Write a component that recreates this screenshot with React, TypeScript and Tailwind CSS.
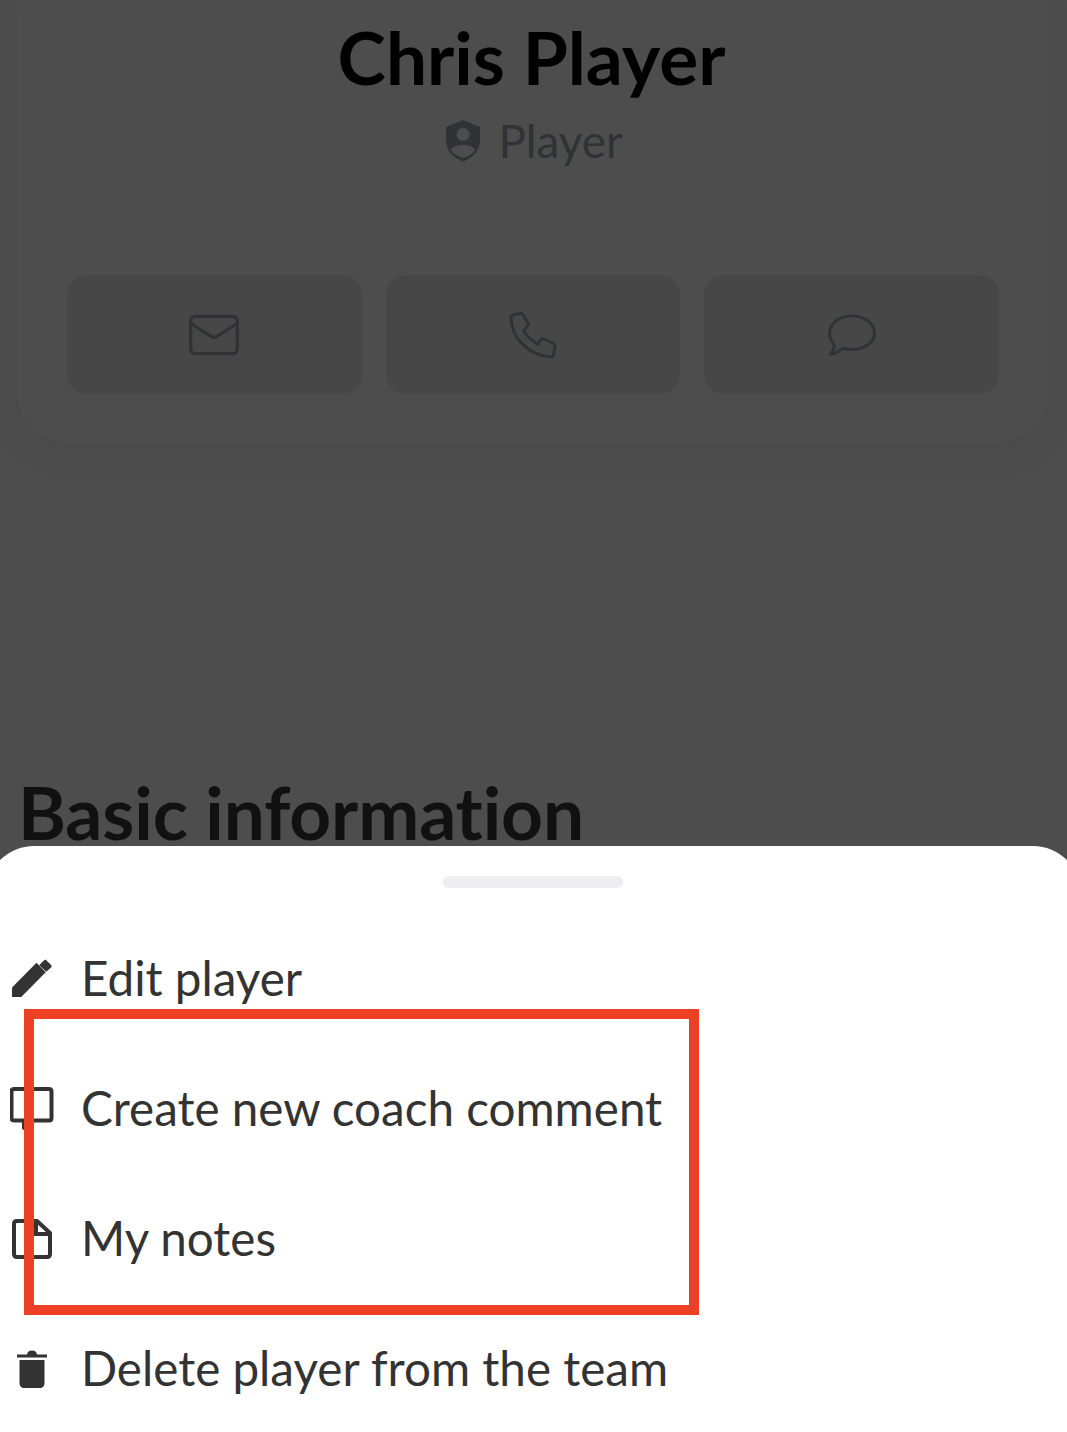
import { Mail } from 'lucide-react';
import type { ReactNode } from 'react';

const PencilIcon = () => (
  <svg viewBox="0 0 42 40" className="h-10 w-10 fill-[#333333]">
    <path d="M0 39.5V29.5L26.5 3.5L36.5 13.5L10 39.5Z" transform="translate(0 -0.5) scale(0.97 1)" />
    <path d="M28.5 6.5L33.5 1.5C34.3 0.7 35.3 0.7 36 1.4L41 6.2C41.8 7 41.8 8 41 8.8L36 13.5Z" transform="translate(0 -1)" />
  </svg>
);

const CommentIcon = () => (
  <svg viewBox="0 0 44 44" fill="none" className="h-11 w-11 stroke-[#333333] stroke-[4]">
    <path d="M4 2H39C40.5 2 41.5 3 41.5 4.500V31C41.500 32.500 40.500 33.500 39 33.500H22L14 41V33.500H4C2.500 33.500 1.500 32.500 1.500 31V4.500C1.500 3 2.500 2 4 2Z" strokeLinejoin="round" />
  </svg>
);

const NoteIcon = () => (
  <svg viewBox="0 0 40 40" fill="none" className="h-10 w-10 stroke-[#333333] stroke-[4]">
    <path d="M5 2H25L38 14V35C38 37 37 38 35 38H5C3 38 2 37 2 35V5C2 3 3 2 5 2Z" strokeLinejoin="round" />
    <path d="M24 2V15H38" />
  </svg>
);

const TrashIcon = () => (
  <svg viewBox="0 0 32 40" className="h-10 w-8 fill-[#333333]">
    <path d="M1 5.500H11C11.500 3 13 1.500 16 1.500C19 1.500 20.500 3 21 5.500H31V8.500H1Z" />
    <path d="M3.500 11H28.500V34C28.500 37 26.500 39 24 39H8C5.500 39 3.500 37 3.500 34Z" />
  </svg>
);

const ShieldIcon = () => (
  <svg viewBox="0 0 34 42" className="h-[42px] w-[34px] fill-[#2f3334]">
    <path
      fillRule="evenodd"
      d="M17 0L34 7V20C34 30 27 38 17 41.500C7 38 0 30 0 20V7ZM17 8A6.500 6.500 0 1 0 17 21A6.500 6.500 0 0 0 17 8ZM17 25C11 25 6.500 27 4.500 29.500C7 33.500 11.500 36.500 17 38C22.500 36.500 27 33.500 29.500 29.500C27.500 27 23 25 17 25Z"
    />
  </svg>
);

const PhoneIcon = () => (
  <svg viewBox="0 0 48 48" fill="none" className="h-12 w-12 stroke-[#2f3334] stroke-[3]" strokeLinejoin="round">
    <path d="M4 4L11 2.500C12.500 2.200 13.500 2.800 14 4L19 12C19.700 13.200 19.500 14.300 18.500 15.200L14.500 19.500C17.500 25 22 29.500 28.500 33L32 28.500C33 27.500 34 27.300 35.200 28L44.500 32.500C45.700 33.200 46.200 34 46 35.500L44.500 44C44.200 45.500 43.300 46.200 42 46C20 44.500 2 27 2 6.500C2 5 2.700 4.300 4 4Z" />
  </svg>
);

const BubbleIcon = () => (
  <svg viewBox="0 0 48 42" fill="none" className="h-[42px] w-12 stroke-[#2f3334] stroke-[3]" strokeLinejoin="round">
    <path d="M24 2C36 2 46.500 9 46.500 19C46.500 29 36 35.500 24 35.500C20.500 35.500 17.500 35 15 34C12 37 7 39.500 2.500 40C5 37 6.500 33.500 6 30C3 27 1.500 23 1.500 19C1.500 9 12 2 24 2Z" />
  </svg>
);

const ContactButton = ({ children }: { children: ReactNode }) => (
  <div className="flex h-[119px] flex-1 items-center justify-center rounded-[20px] bg-[#474747] text-[#2f3334]">
    {children}
  </div>
);

const SheetRow = ({ icon, label }: { icon: ReactNode; label: string }) => (
  <div className="flex h-[130px] items-center">
    <div className="flex w-[64px] shrink-0 justify-center">{icon}</div>
    <span className="mb-0.5 ml-[17px] text-[47.6px] leading-none text-[#333333]">{label}</span>
  </div>
);

export default function App() {
  return (
    <div className="relative flex h-[1432px] flex-col overflow-hidden bg-[#4d4d4d] font-['Lato',sans-serif]">
      <div className="h-[846px] shrink-0 overflow-hidden">
        <div className="ml-[17px] mr-[18px] flex h-[442px] flex-col items-center rounded-b-[48px] bg-[#4d4d4d] px-[50px] shadow-[0_12px_36px_rgba(0,0,0,0.05)]">
          <h1 className="mr-[3px] mt-[13px] text-[73px] font-bold leading-[88px] text-[#000000]">
            Chris Player
          </h1>
          <div className="ml-[3px] mt-[15px] flex h-[50px] items-center gap-[18px]">
            <ShieldIcon />
            <span className="text-[45.8px] leading-none text-[#2f3334]">Player</span>
          </div>
          <div className="mt-[109px] flex w-full gap-6">
            <ContactButton>
              <Mail size={56} strokeWidth={1.400} />
            </ContactButton>
            <ContactButton>
              <PhoneIcon />
            </ContactButton>
            <ContactButton>
              <BubbleIcon />
            </ContactButton>
          </div>
        </div>
        <h2 className="ml-[18px] mt-[326px] whitespace-nowrap text-[73px] font-bold leading-[88px] tracking-[-0.12px] text-[#111111]">
          Basic information
        </h2>
      </div>

      <div className="-mx-[14px] flex flex-1 flex-col rounded-t-[48px] bg-white pl-[14px] pr-[15px]">
        <div className="mx-auto mt-[30px] h-3 w-[180px] rounded-full bg-[#ededf2]" />
        <div className="mt-[26px]">
          <SheetRow icon={<PencilIcon />} label="Edit player" />
          <SheetRow icon={<CommentIcon />} label="Create new coach comment" />
          <SheetRow icon={<NoteIcon />} label="My notes" />
          <SheetRow icon={<TrashIcon />} label="Delete player from the team" />
        </div>
      </div>

      {/* annotation drawn over the sheet */}
      <div className="absolute left-6 top-[1009px] h-[306px] w-[675px] border-10 border-[#ed4126]" />
    </div>
  );
}
